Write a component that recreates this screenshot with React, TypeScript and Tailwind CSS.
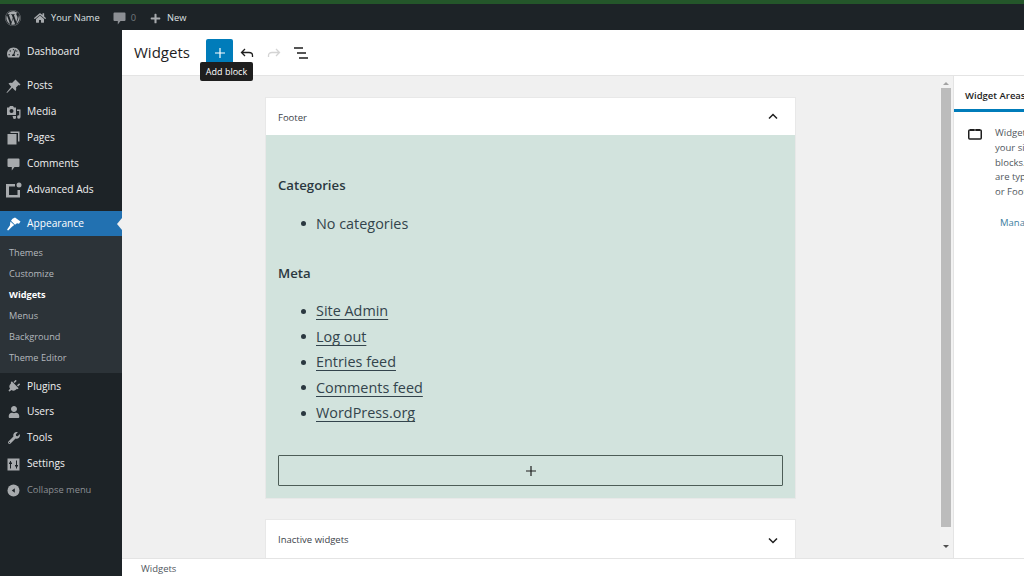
import React from "react";
import { FaWordpress, FaHome, FaPlus, FaTachometerAlt, FaPlug, FaUser, FaWrench } from "react-icons/fa";

const Bubble = ({ className = "" }: { className?: string }) => (
  <svg width="13" height="13" viewBox="0 0 13 13" className={className}>
    <path fill="currentColor" d="M1.500 0.500h10a1 1 0 0 1 1 1v6.500a1 1 0 0 1-1 1H7.500L4.800 12.500V9H1.500a1 1 0 0 1-1-1V1.500a1 1 0 0 1 1-1z" />
  </svg>
);
const Pin = () => (
  <svg width="15" height="15" viewBox="0 0 15 15">
    <path fill="currentColor" d="M9.500 0.500l5 5-1 1-1-.5-2.500 2.500c.5 1.500.2 2.800-.5 3.500L6.300 8.800 1 14 .5 13.500 5.200 7.700 2.500 4.500c.8-.7 2-1 3.500-.5L8.500 1.500 8.500 1.500z" />
  </svg>
);
const Media = () => (
  <svg width="15" height="15" viewBox="0 0 15 15">
    <path fill="currentColor" fillRule="evenodd" d="M1 2.500h2L4 1h3l1 1.500h2V10H1zM5.500 4a2 2 0 1 0 0 4 2 2 0 0 0 0-4z" />
    <path fill="currentColor" d="M11 4.500h3.500V12a1.700 1.700 0 1 1-1.300-1.600V6H11zM6.500 11h3.500v1.500a1.500 1.500 0 1 1-3 0z" />
  </svg>
);
const Pages = () => (
  <svg width="13" height="14" viewBox="0 0 13 14">
    <path fill="currentColor" d="M3.500 0.500h9v10h-1.500V2H3.500z" />
    <path fill="currentColor" d="M0.500 3h9v10.500h-9z" />
  </svg>
);
const Brush = () => (
  <svg width="15" height="14" viewBox="0 0 15 14">
    <path fill="currentColor" d="M9 0.500l5.500 4-1.500 2.300-2-.6-2 1.600L5 3.800l1.500-2z" />
    <path fill="currentColor" d="M4.400 4.600l3.800 3.500-2.500 1.900-3.200 3.300c-.6.500-1.600-.4-1.200-1l2.600-3.700z" />
  </svg>
);
const Settings = () => (
  <svg width="13" height="13" viewBox="0 0 13 13">
    <path fill="currentColor" fillRule="evenodd" d="M0.500 0.500h12v12H.500zM3 3v1.500H2V6h1v4.500h1V6h1V4.500H4V3zM9 2.500V7H8v1.500h1V10.500h1V8.500h1V7h-1V2.500z" />
  </svg>
);
const Ads = () => (
  <svg width="16" height="16" viewBox="0 0 16 16">
    <path fill="currentColor" d="M0 2h9v2.500H3v8.500h8.500V8H14v7.500H0z" />
    <circle cx="13" cy="3" r="2.500" fill="currentColor" />
  </svg>
);
const Collapse = () => (
  <svg width="13" height="13" viewBox="0 0 13 13" className="text-[#a7aaad]">
    <circle cx="6.500" cy="6.500" r="6" fill="currentColor" />
    <path d="M7.800 4.200v4.600L4.800 6.500z" fill="#1d2327" />
  </svg>
);

function Item({ icon, label, h = "h-[26px]" }: { icon: React.ReactNode; label: string; h?: string }) {
  return (
    <div className={`flex items-center ${h}`}>
      <div className="flex w-[27px] shrink-0 justify-center text-[#a7aaad]">{icon}</div>
      <span className="text-[10.200px] text-[#f0f0f1]">{label}</span>
    </div>
  );
}

function Sub({ label, active }: { label: string; active?: boolean }) {
  return (
    <div className={`flex h-[21px] items-center pl-[9px] text-[9.200px] ${active ? "font-bold text-white" : "text-[#b4b9be]"}`}>{label}</div>
  );
}

function Bullet({ children, link }: { children: string; link?: boolean }) {
  return (
    <li className="flex h-[25.500px] items-center">
      <span className="mr-[10px] ml-[23px] size-[5px] rounded-full bg-[#2b3840]" />
      <span className={`text-[14.400px] text-[#33444c] ${link ? "underline decoration-1 underline-offset-[3px]" : ""}`}>{children}</span>
    </li>
  );
}

const Chevron = ({ up }: { up?: boolean }) => (
  <svg width="10" height="7" viewBox="0 0 10 7" className="text-[#1e1e1e]">
    <path d={up ? "M1 5.500L5 1.500l4 4" : "M1 1.500L5 5.500l4-4"} fill="none" stroke="currentColor" strokeWidth="1.500" />
  </svg>
);

export default function App() {
  return (
    <div className="flex h-[576px] w-[1024px] flex-col overflow-hidden bg-[#f0f0f0] font-['Open_Sans','Noto_Sans',sans-serif]">
      <div className="h-[4px] shrink-0 bg-[#24562a]" />
      <div className="flex h-[26px] shrink-0 items-center bg-[#1d2327] pt-[2px] text-[#dfe1e2]">
        <FaWordpress className="ml-[5px] size-[16px] text-[#a7aaad]" />
        <FaHome className="ml-[13px] size-[12px] text-[#a7aaad]" />
        <span className="ml-[5px] text-[9.300px]">Your Name</span>
        <span className="ml-[13px] text-[#8c8f94]"><Bubble className="block" /></span>
        <span className="ml-[5px] text-[9.300px] text-[#72777c]">0</span>
        <FaPlus className="ml-[14px] size-[11px] text-[#a7aaad]" />
        <span className="ml-[6px] text-[9.300px]">New</span>
      </div>
      <div className="flex min-h-0 flex-1">
        <aside className="flex w-[122px] shrink-0 flex-col bg-[#1d2327]">
          <div className="mt-[9px]">
            <Item icon={<FaTachometerAlt className="size-[13px]" />} label="Dashboard" />
          </div>
          <div className="mt-[8px]">
            <Item icon={<Pin />} label="Posts" />
            <Item icon={<Media />} label="Media" />
            <Item icon={<Pages />} label="Pages" />
            <Item icon={<Bubble />} label="Comments" />
            <Item icon={<Ads />} label="Advanced Ads" h="h-[25px]" />
          </div>
          <div className="relative mt-[9px] flex h-[25px] items-center bg-[#2271b1]">
            <div className="flex w-[27px] shrink-0 justify-center text-white"><Brush /></div>
            <span className="text-[10.200px] text-white">Appearance</span>
            <span className="absolute right-0 top-[7px] size-0 border-y-[6px] border-r-[5px] border-y-transparent border-r-[#f0f0f0]" />
          </div>
          <div className="bg-[#2c3338] pb-[5px] pt-[6px]">
            <Sub label="Themes" />
            <Sub label="Customize" />
            <Sub label="Widgets" active />
            <Sub label="Menus" />
            <Sub label="Background" />
            <Sub label="Theme Editor" />
          </div>
          <div className="pt-[1px]">
            <Item icon={<FaPlug className="size-[13px] rotate-45" />} label="Plugins" h="h-[25px]" />
            <Item icon={<FaUser className="size-[12px]" />} label="Users" />
            <Item icon={<FaWrench className="size-[12px]" />} label="Tools" />
            <Item icon={<Settings />} label="Settings" />
            <div className="flex h-[26px] items-center">
              <div className="flex w-[27px] shrink-0 justify-center"><Collapse /></div>
              <span className="text-[9.300px] text-[#8c8f94]">Collapse menu</span>
            </div>
          </div>
        </aside>
        <div className="flex min-w-0 flex-1 flex-col">
          <header className="relative flex h-[46px] shrink-0 items-center border-b border-[#e4e4e4] bg-white pl-[12px]">
            <h1 className="w-[72px] text-[15px] font-medium text-[#1e1e1e]">Widgets</h1>
            <div className="flex size-[27px] items-center justify-center rounded-[2px] bg-[#007cba] text-white">
              <svg width="10" height="10" viewBox="0 0 10 10"><path d="M5 0v10M0 5h10" stroke="currentColor" strokeWidth="1.200" /></svg>
            </div>
            <svg className="ml-[7px]" width="14" height="10" viewBox="0 0 14 10"><path d="M5 1L1.500 4.500 5 8M1.500 4.500H9c2 0 3.500 1.200 3.500 3V9" fill="none" stroke="#1e1e1e" strokeWidth="1.300" /></svg>
            <svg className="ml-[13px]" width="14" height="10" viewBox="0 0 14 10"><path d="M9 1L12.500 4.500 9 8M12.500 4.500H5C3 4.500 1.500 5.700 1.500 7.500V9" fill="none" stroke="#d4d4d4" strokeWidth="1.300" /></svg>
            <svg className="ml-[13px]" width="14" height="12" viewBox="0 0 14 12"><path d="M0 1h9M3 6h9M5 11h9" stroke="#1e1e1e" strokeWidth="1.400" /></svg>
            <div className="absolute left-[78px] top-[32px] flex h-[19px] w-[53px] items-center justify-center rounded-[2px] bg-[#1e1e1e] text-[9px] text-white">Add block</div>
          </header>
          <div className="flex min-h-0 flex-1 overflow-hidden">
            <main className="flex w-[818px] shrink-0 flex-col items-center bg-[#f0f0f0] pr-[1px] pt-[22px]">
              <section className="w-[529px] shrink-0 shadow-[0_0_0_1px_#e8e8e8]">
                <div className="flex h-[37px] items-center justify-between bg-white pl-[12px] pr-[17px]">
                  <span className="pt-[3px] text-[9.500px] font-medium text-[#3c434a]">Footer</span>
                  <Chevron up />
                </div>
                <div className="h-[363px] bg-[#d2e3dd] px-[12px] pt-[39px]">
                  <h2 className="h-[22px] text-[13.200px] leading-[22px] font-semibold text-[#2b3840]">Categories</h2>
                  <ul className="mt-[15px]"><Bullet>No categories</Bullet></ul>
                  <h2 className="mt-[25px] h-[22px] text-[13.200px] leading-[22px] font-semibold text-[#2b3840]">Meta</h2>
                  <ul className="mt-[15px]">
                    <Bullet link>Site Admin</Bullet>
                    <Bullet link>Log out</Bullet>
                    <Bullet link>Entries feed</Bullet>
                    <Bullet link>Comments feed</Bullet>
                    <Bullet link>WordPress.org</Bullet>
                  </ul>
                  <div className="mt-[29px] flex h-[31px] items-center justify-center rounded-[1px] border border-[#4d5d57] text-[#1e1e1e]">
                    <svg width="10" height="10" viewBox="0 0 10 10"><path d="M5 0v10M0 5h10" stroke="currentColor" strokeWidth="1.200" /></svg>
                  </div>
                </div>
              </section>
              <section className="mt-[22px] flex h-[38px] w-[529px] shrink-0 items-center justify-between bg-white pl-[12px] pr-[17px] pt-[2px] shadow-[0_0_0_1px_#e8e8e8]">
                <span className="text-[9.500px] font-medium text-[#3c434a]">Inactive widgets</span>
                <Chevron />
              </section>
            </main>
            <div className="flex w-[13px] shrink-0 flex-col items-center bg-[#f2f2f2] pr-[2px]">
              <span className="mt-[6px] size-0 border-x-[3px] border-b-[3px] border-x-transparent border-b-[#a3a3a3]" />
              <div className="mt-[3px] h-[439px] w-[10px] bg-[#bcbcbc]" />
              <span className="mt-[18px] size-0 border-x-[3px] border-t-[3px] border-x-transparent border-t-[#505050]" />
            </div>
            <aside className="w-[280px] shrink-0 border-l border-[#e4e4e4] bg-white">
              <div className="h-[36px] w-full border-b-[3px] border-[#007cba] pl-[11px] pt-[13px] text-[9.500px] font-semibold text-[#1e1e1e]">Widget Areas</div>
              <div className="flex pl-[14px] pt-[14px]">
                <svg width="14" height="12" viewBox="0 0 14 12" className="mt-[2px] shrink-0">
                  <rect x="0.750" y="2" width="12.500" height="9" rx="1" fill="none" stroke="#1e1e1e" strokeWidth="1.500" />
                  <path d="M2 1h4v2H2zM8 1h4v2H8z" fill="#1e1e1e" />
                </svg>
                <div className="ml-[13px] text-[9.500px] leading-[14.750px] text-[#50575e]">
                  <p className="whitespace-nowrap">Widget Areas are global parts in<br />your site's layout that can accept<br />blocks. These vary by theme, but<br />are typically parts like your Sidebar<br />or Footer.</p>
                  <p className="mt-[16px] ml-[5px] text-[#3b7da0]">Manage with live preview</p>
                </div>
              </div>
            </aside>
          </div>
          <footer className="flex h-[18px] shrink-0 items-center border-t border-[#e4e4e4] bg-white pl-[19px] pt-[4px] text-[9.500px] text-[#50575e]">Widgets</footer>
        </div>
      </div>
    </div>
  );
}
